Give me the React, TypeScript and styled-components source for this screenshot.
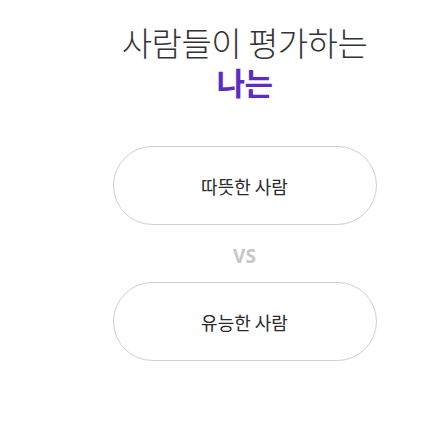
import styled, { createGlobalStyle } from "styled-components";

const GlobalStyle = createGlobalStyle`
  body {
    margin: 0;
    background: #fff;
    font-family: "Noto Sans CJK KR", "Noto Sans", sans-serif;
  }
`;

const Wrapper = styled.div`
  display: flex;
  flex-direction: column;
  align-items: center;
  padding: 20px 0 0 45px;
`;

const Title = styled.h2`
  margin: 0 0 46px;
  font-size: 33px;
  font-weight: 300;
  line-height: 44px;
  color: #333;
  text-align: center;
  letter-spacing: -0.5px;
`;

const Highlight = styled.strong`
  display: block;
  font-size: 31px;
  font-weight: 700;
  line-height: 36px;
  color: #5a2dc4;
`;

const ChoiceBtn = styled.button`
  width: 264px;
  height: 79px;
  border: 1px solid #cfcfcf;
  border-radius: 40px;
  background: #fff;
  font-family: inherit;
  font-size: 18px;
  font-weight: 400;
  color: #2a2a2a;
  cursor: pointer;
`;

const Versus = styled.div`
  margin: 23px 0 18px;
  font-family: "Noto Sans", sans-serif;
  font-size: 19px;
  font-weight: 700;
  line-height: 16px;
  color: #c7c7c7;
`;

function App() {
  return (
    <Wrapper>
      <GlobalStyle />
      <Title>
        사람들이 평가하는
        <Highlight>나는</Highlight>
      </Title>
      <ChoiceBtn>따뜻한 사람</ChoiceBtn>
      <Versus>VS</Versus>
      <ChoiceBtn>유능한 사람</ChoiceBtn>
    </Wrapper>
  );
}

export default App;
